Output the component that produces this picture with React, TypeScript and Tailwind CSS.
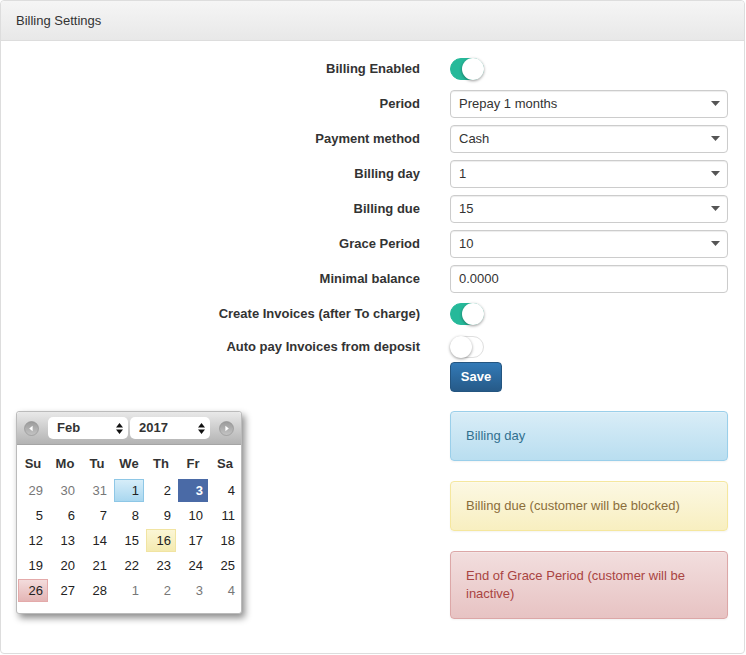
import React from "react";

type Day = { n: number; muted?: boolean; mark?: "today" | "selected" | "due" | "grace" };

const weeks: Day[][] = [
    [{ n: 29, muted: true }, { n: 30, muted: true }, { n: 31, muted: true }, { n: 1, mark: "today" }, { n: 2 }, { n: 3, mark: "selected" }, { n: 4 }],
    [{ n: 5 }, { n: 6 }, { n: 7 }, { n: 8 }, { n: 9 }, { n: 10 }, { n: 11 }],
    [{ n: 12 }, { n: 13 }, { n: 14 }, { n: 15 }, { n: 16, mark: "due" }, { n: 17 }, { n: 18 }],
    [{ n: 19 }, { n: 20 }, { n: 21 }, { n: 22 }, { n: 23 }, { n: 24 }, { n: 25 }],
    [{ n: 26, mark: "grace" }, { n: 27 }, { n: 28 }, { n: 1, muted: true }, { n: 2, muted: true }, { n: 3, muted: true }, { n: 4, muted: true }],
];

const Toggle = ({ on }: { on: boolean }) =>
    on ? (
        <div className="relative w-[34px] h-[22px] rounded-full bg-[#26b99a] border border-[#26b99a]">
            <div className="absolute right-[-1px] top-[-1px] w-[22px] h-[22px] rounded-full bg-white shadow-[0_1px_3px_rgba(0,0,0,0.4)]" />
        </div>
    ) : (
        <div className="relative w-[34px] h-[22px] rounded-full bg-white border border-[#dfdfdf]">
            <div className="absolute left-[-1px] top-[-1px] w-[22px] h-[22px] rounded-full bg-white shadow-[0_1px_3px_rgba(0,0,0,0.4)]" />
        </div>
    );

const Select = ({ value }: { value: string }) => (
    <div className="h-[28px] border border-[#ccc] rounded-[4px] bg-white pl-2 pr-[7px] flex items-center justify-between shadow-[inset_0_1px_1px_rgba(0,0,0,0.075)]">
        <span>{value}</span>
        <svg width="9" height="5" viewBox="0 0 9 5">
            <path d="M0 0h9L4.5 5z" fill="#555" />
        </svg>
    </div>
);

const Row = ({ label, children, h = "h-[35px]" }: { label: string; children: React.ReactNode; h?: string }) => (
    <div className={`flex items-center ${h}`}>
        <div className="w-[404px] text-right font-bold text-[#333]">{label}</div>
        <div className="ml-[30px] w-[278px]">{children}</div>
    </div>
);

const NavBtn = ({ dir }: { dir: "prev" | "next" }) => (
    <svg width="15" height="15" viewBox="0 0 15 15">
        <defs>
            <linearGradient id={`g-${dir}`} x1="0" y1="0" x2="0" y2="1">
                <stop offset="0" stopColor="#9a9a9a" />
                <stop offset="1" stopColor="#c4c4c4" />
            </linearGradient>
        </defs>
        <circle cx="7.5" cy="7.5" r="7" fill={`url(#g-${dir})`} stroke="#8f8f8f" strokeWidth="0.6" />
        {dir === "prev" ? <path d="M5.2 7.5L8.6 4.8v5.4z" fill="#fff" /> : <path d="M9.8 7.5L6.4 4.8v5.4z" fill="#fff" />}
    </svg>
);

const UpDown = () => (
    <svg width="7" height="11" viewBox="0 0 7 11">
        <path d="M0 4.5L3.5 0 7 4.5zM0 6.5h7L3.5 11z" fill="#111" />
    </svg>
);

const cellStyle = (d: Day) => {
    switch (d.mark) {
        case "today":
            return "bg-linear-to-b from-[#d6edf9] to-[#a9d7ef] border border-[#8ec7e6] text-[#222]";
        case "selected":
            return "bg-[#4a6aa6] border border-[#4a6aa6] text-white font-bold";
        case "due":
            return "bg-linear-to-b from-[#fbf6d6] to-[#f4eab0] border border-[#f1e4a2] text-[#222]";
        case "grace":
            return "bg-linear-to-b from-[#f3dcdc] to-[#e4b5b5] border border-[#e4aaaa] text-[#222]";
        default:
            return d.muted ? "border border-transparent text-[#777]" : "border border-transparent text-[#222]";
    }
};

const Calendar = () => (
    <div className="w-[226px] bg-white border border-[#bbb] rounded-[3px] shadow-[3px_4px_7px_rgba(0,0,0,0.45)] pb-[10px]">
        <div className="h-[33px] flex items-center px-[7px] bg-linear-to-b from-[#e9e9e9] to-[#b3b3b3] border-b border-[#a5a5a5] rounded-t-[3px]">
            <NavBtn dir="prev" />
            <div className="ml-[9px] w-[80px] h-[22px] bg-white rounded-[5px] flex items-center justify-between pl-[9px] pr-[5px] font-bold">
                Feb <UpDown />
            </div>
            <div className="ml-[2px] w-[80px] h-[22px] bg-white rounded-[5px] flex items-center justify-between pl-[9px] pr-[5px] font-bold">
                2017 <UpDown />
            </div>
            <div className="ml-auto">
                <NavBtn dir="next" />
            </div>
        </div>
        <div className="grid grid-cols-7 mt-[5px] h-[28px] items-center font-bold text-[#333] text-center">
            {["Su", "Mo", "Tu", "We", "Th", "Fr", "Sa"].map((d) => (
                <div key={d}>{d}</div>
            ))}
        </div>
        {weeks.map((w, i) => (
            <div key={i} className="grid grid-cols-7 h-[25px]">
                {w.map((d, j) => (
                    <div key={j} className="p-[1px]">
                        <div className={`h-[23px] flex items-center justify-end pr-[4px] ${cellStyle(d)}`}>{d.n}</div>
                    </div>
                ))}
            </div>
        ))}
    </div>
);

const Legend = ({ tone, children }: { tone: string; children: React.ReactNode }) => (
    <div className={`border rounded-[4px] px-[15px] py-[15px] leading-[18px] shadow-[inset_0_1px_0_rgba(255,255,255,0.25),0_1px_2px_rgba(0,0,0,0.05)] ${tone}`}>
        {children}
    </div>
);

const App: React.FC = () => {
    return (
        <div className="w-[746px] h-[655px] bg-white text-[13px] text-[#333] font-['Liberation_Sans',Arial,sans-serif]">
            <div className="h-[654px] w-[745px] border border-[#ddd] rounded-[4px] flex flex-col">
                <div className="h-[40px] flex items-center px-[15px] bg-linear-to-b from-[#f5f5f5] to-[#e8e8e8] border-b border-[#ddd] rounded-t-[4px]">
                    Billing Settings
                </div>
                <div className="px-[15px] pt-[10px]">
                    <Row label="Billing Enabled">
                        <Toggle on />
                    </Row>
                    <Row label="Period">
                        <Select value="Prepay 1 months" />
                    </Row>
                    <Row label="Payment method">
                        <Select value="Cash" />
                    </Row>
                    <Row label="Billing day">
                        <Select value="1" />
                    </Row>
                    <Row label="Billing due">
                        <Select value="15" />
                    </Row>
                    <Row label="Grace Period">
                        <Select value="10" />
                    </Row>
                    <Row label="Minimal balance">
                        <div className="h-[28px] border border-[#ccc] rounded-[4px] bg-white pl-2 flex items-center shadow-[inset_0_1px_1px_rgba(0,0,0,0.075)]">
                            0.0000
                        </div>
                    </Row>
                    <Row label="Create Invoices (after To charge)">
                        <Toggle on />
                    </Row>
                    <Row label="Auto pay Invoices from deposit" h="h-[31px]">
                        <Toggle on={false} />
                    </Row>
                    <div className="flex">
                        <div className="w-[404px]" />
                        <button className="ml-[30px] w-[52px] h-[30px] rounded-[4px] border border-[#245580] bg-linear-to-b from-[#337ab7] to-[#265a88] text-white font-bold">
                            Save
                        </button>
                    </div>
                    <div className="flex mt-[19px]">
                        <div className="w-[434px]">
                            <Calendar />
                        </div>
                        <div className="w-[278px] flex flex-col gap-[20px]">
                            <Legend tone="bg-linear-to-b from-[#d9edf7] to-[#b9def0] border-[#9acfea] text-[#31708f]">Billing day</Legend>
                            <Legend tone="bg-linear-to-b from-[#fcf8e3] to-[#f8efc0] border-[#f5e79e] text-[#8a6d3b]">
                                Billing due (customer will be blocked)
                            </Legend>
                            <Legend tone="bg-linear-to-b from-[#f2dede] to-[#e7c3c3] border-[#dca7a7] text-[#a94442]">
                                End of Grace Period (customer will be inactive)
                            </Legend>
                        </div>
                    </div>
                </div>
            </div>
        </div>
    );
};

export default App;
